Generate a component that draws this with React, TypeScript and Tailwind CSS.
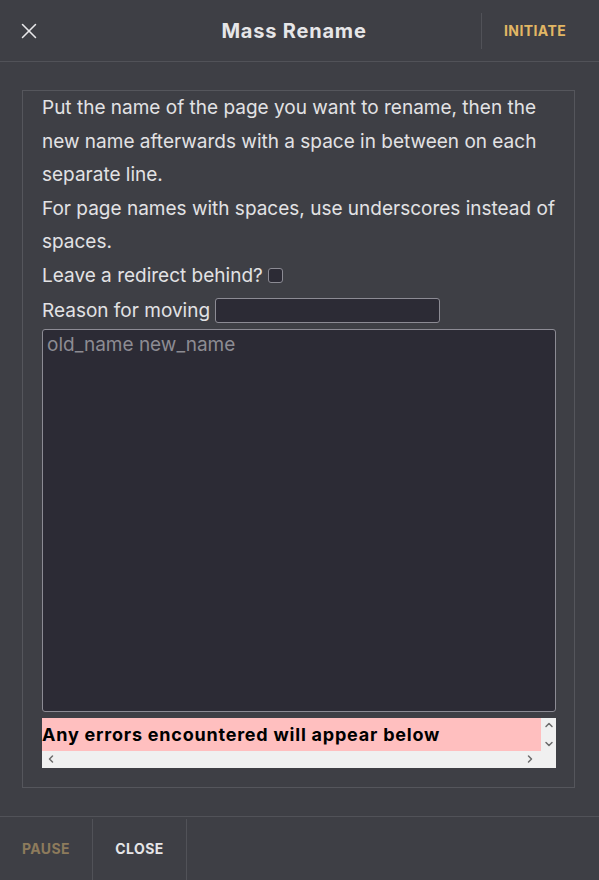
import { X, ChevronUp, ChevronDown, ChevronLeft, ChevronRight } from "lucide-react";

const body = "font-['Inter','Noto_Sans',sans-serif]";
const heading = "font-['Inter','Liberation_Sans',sans-serif]";

function ErrorLog() {
  return (
    <div className="mt-[6px] w-[514px] h-[50px] bg-[#f0f0f0] flex flex-col">
      <div className="flex h-[33px]">
        <div
          className={`w-[499px] h-[33px] bg-[#ffbfbf] flex items-center text-[18px] font-bold text-black tracking-[0.78px] whitespace-nowrap overflow-hidden ${heading}`}
        >
          Any errors encountered will appear below
        </div>
        <div className="flex-1 flex flex-col items-center justify-between py-[1px] text-[#6b6b6b]">
          <ChevronUp size={12} strokeWidth={3} />
          <ChevronDown size={12} strokeWidth={3} />
        </div>
      </div>
      <div className="flex-1 flex items-center justify-between pl-[3px] pr-[20px] text-[#6b6b6b]">
        <ChevronLeft size={12} strokeWidth={3} />
        <ChevronRight size={12} strokeWidth={3} />
      </div>
    </div>
  );
}

export default function App() {
  return (
    <div className={`w-[599px] h-[880px] bg-[#3e3f45] text-[#e2e2e4] flex flex-col ${body}`}>
      {/* Header */}
      <div className="h-[62px] shrink-0 flex items-center border-b border-[#515258]">
        <button className="w-[58px] h-full flex items-center justify-center text-[#e8e8ea]">
          <X size={26} strokeWidth={1.4} />
        </button>
        <div className={`flex-1 text-center text-[20px] font-bold tracking-[0.8px] text-[#e6e6e8] pl-[49px] ${heading}`}>
          Mass Rename
        </div>
        <div className="h-[36px] border-l border-[#515258] w-[118px] flex items-center pl-[22px]">
          <span className={`text-[14px] font-bold tracking-[0.4px] text-[#e2b764] ${heading}`}>INITIATE</span>
        </div>
      </div>

      {/* Content */}
      <div className="flex-1 pl-[22px] pr-[24px] pt-[28px]">
        <div className="border border-[#55565c] pl-[19px] pr-[19px] pb-[19px]">
          <div className="text-[19px] leading-[33.5px]">
            <p>
              Put the name of the page you want to rename, then the new name afterwards with a space in between on
              each separate line.
            </p>
            <p>For page names with spaces, use underscores instead of spaces.</p>
            <div className="flex items-center">
              <span>Leave a redirect behind?</span>
              <span className="ml-[5px] w-[15px] h-[15px] rounded-[3px] border border-[#8c8b94] bg-[#2c2b35]" />
            </div>
            <div className="flex items-center pt-[2px]">
              <span>Reason for moving</span>
              <input className="ml-[5px] w-[225px] h-[25px] rounded-[3px] border border-[#8c8b94] bg-[#2c2b35] outline-none" />
            </div>
          </div>
          <textarea
            placeholder="old_name new_name"
            className="mt-[1px] block w-[514px] h-[383px] resize-none rounded-[3px] border border-[#8c8b94] bg-[#2c2b35] px-[4px] py-[2px] text-[19px] leading-[25px] text-[#e2e2e4] placeholder:text-[#8d8c93] outline-none"
          />
          <ErrorLog />
        </div>
      </div>

      {/* Footer */}
      <div className="h-[64px] shrink-0 border-t border-[#515258] flex">
        <div className="w-[93px] mt-[2px] border-r border-[#515258] flex items-center justify-center pb-[2px]">
          <span className={`text-[14px] font-bold tracking-[0.4px] text-[#8d7b5c] ${heading}`}>PAUSE</span>
        </div>
        <div className="w-[94px] mt-[2px] border-r border-[#515258] flex items-center justify-center pb-[2px]">
          <span className={`text-[14px] font-bold tracking-[0.4px] text-[#e6e6e8] ${heading}`}>CLOSE</span>
        </div>
      </div>
    </div>
  );
}
